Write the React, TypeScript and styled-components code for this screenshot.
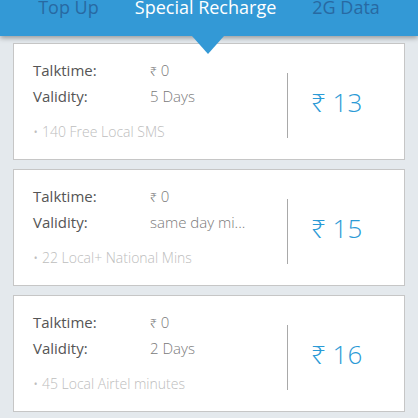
import React from "react";
import styled, { createGlobalStyle } from "styled-components";

type Plan = {
  talktime: string;
  validity: string;
  benefit: string;
  price: string;
};

const plans: Plan[] = [
  { talktime: "0", validity: "5 Days", benefit: "140 Free Local SMS", price: "13" },
  { talktime: "0", validity: "same day mi...", benefit: "22 Local+ National Mins", price: "15" },
  { talktime: "0", validity: "2 Days", benefit: "45 Local Airtel minutes", price: "16" },
];

const tabs = ["Top Up", "Special Recharge", "2G Data"];

const App: React.FC = () => (
  <>
    <GlobalStyle />
    <Page>
      <Header>
        <TabList>
          {tabs.map((t) => (
            <Tab key={t} $active={t === "Special Recharge"}>
              {t}
            </Tab>
          ))}
        </TabList>
        <Pointer />
      </Header>
      <PlanList>
        {plans.map((p) => (
          <Card key={p.price}>
            <Info>
              <Row>
                <Label>Talktime:</Label>
                <Value>
                  <SmallRupee>₹</SmallRupee> {p.talktime}
                </Value>
              </Row>
              <Row>
                <Label>Validity:</Label>
                <Value>{p.validity}</Value>
              </Row>
              <Benefit>• {p.benefit}</Benefit>
            </Info>
            <Divider />
            <PriceBox>₹ {p.price}</PriceBox>
          </Card>
        ))}
      </PlanList>
    </Page>
  </>
);

const GlobalStyle = createGlobalStyle`
  html, body {
    margin: 0;
    padding: 0;
    background: #e4e9ed;
    font-family: "Open Sans", "Noto Sans", "DejaVu Sans", sans-serif;
  }
`;

const Page = styled.div`
  width: 418px;
  height: 418px;
  overflow: hidden;
  background: #e4e9ed;
`;

const Header = styled.div`
  position: relative;
  z-index: 2;
  display: flex;
  justify-content: center;
  align-items: flex-start;
  height: 36px;
  background: #3399d6;
  box-shadow: 0 2px 5px rgba(0, 0, 0, 0.35);
`;

const TabList = styled.div`
  display: flex;
  gap: 36px;
  margin-top: -6px;
`;

const Tab = styled.div<{ $active?: boolean }>`
  font-size: 18px;
  line-height: 26px;
  color: ${(p) => (p.$active ? "#ffffff" : "#2869a2")};
  white-space: nowrap;
`;

const Pointer = styled.div`
  position: absolute;
  left: 192px;
  top: 36px;
  width: 0;
  height: 0;
  border-left: 16.5px solid transparent;
  border-right: 16.5px solid transparent;
  border-top: 18px solid #3399d6;
`;

const PlanList = styled.div`
  display: flex;
  flex-direction: column;
  gap: 9px;
  padding: 7px 13px 0;
`;

const Card = styled.div`
  display: flex;
  height: 115px;
  background: #ffffff;
  border: 1px solid #c6c6c6;
`;

const Info = styled.div`
  flex: 1;
  padding: 14px 0 0 19px;
`;

const Row = styled.div`
  display: grid;
  grid-template-columns: 117px 1fr;
  font-size: 15px;
  line-height: 24px;
`;

const Label = styled.span`
  color: #555555;
`;

const Value = styled.span`
  color: #7a7a7a;
  font-weight: 300;
`;

const SmallRupee = styled.span`
  font-size: 12px;
  color: #777777;
`;

const Benefit = styled.div`
  margin-top: 14px;
  font-size: 14px;
  line-height: 20px;
  font-weight: 300;
  color: #bdbdbd;
`;

const Divider = styled.div`
  width: 1px;
  height: 65px;
  margin-top: 29px;
  background: #a9a9a9;
`;

const PriceBox = styled.div`
  width: 93px;
  display: flex;
  align-items: center;
  padding-left: 23px;
  font-size: 26px;
  font-weight: 300;
  color: #2b9ad6;
  white-space: nowrap;
`;

export default App;
